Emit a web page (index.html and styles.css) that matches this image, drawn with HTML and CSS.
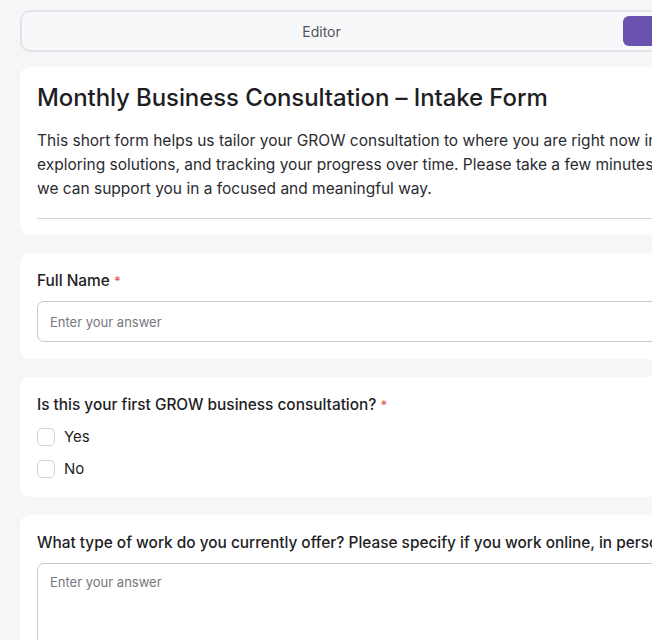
FILE: index.html
```html
<!DOCTYPE html>
<html lang="en">
<head>
    <meta charset="UTF-8">
    <meta name="viewport" content="width=device-width, initial-scale=1.0">
    <title>Monthly Business Consultation - Intake Form</title>
    <link rel="stylesheet" href="styles.css">
</head>
<body>
    <div class="page">
        <div class="tabs">
            <button class="tab">Editor</button>
            <button class="tab active">Preview</button>
        </div>

        <div class="card header-card">
            <h1>Monthly Business Consultation – Intake Form</h1>
            <p class="intro">This short form helps us tailor your GROW consultation to where you are right now in your business, clarifying your goals, understanding your reality,<br>exploring solutions, and tracking your progress over time. Please take a few minutes to answer each question honestly so<br>we can support you in a focused and meaningful way.</p>
            <hr class="divider">
        </div>

        <div class="card">
            <label class="question">Full Name <span class="req">*</span></label>
            <input class="answer" type="text" placeholder="Enter your answer">
        </div>

        <div class="card">
            <label class="question">Is this your first GROW business consultation? <span class="req">*</span></label>
            <div class="options">
                <label class="option"><span class="box"></span>Yes</label>
                <label class="option"><span class="box"></span>No</label>
            </div>
        </div>

        <div class="card">
            <label class="question">What type of work do you currently offer? Please specify if you work online, in person, or both, and who your main clients are.</label>
            <textarea class="answer long" placeholder="Enter your answer"></textarea>
        </div>
    </div>
</body>
</html>
```

FILE: styles.css
```css
body {
    font-family: "Inter", "Lato", sans-serif;
    background-color: #f5f6f8;
    color: #1e1e24;
    margin: 0;
    padding: 0;
    overflow: hidden;
}

.page {
    width: 1240px;
    padding: 10px 20px;
    box-sizing: border-box;
    display: flex;
    flex-direction: column;
    gap: 18px;
}

.tabs {
    display: flex;
    gap: 6px;
    padding: 4px 4px;
    border: 2px solid #e2e3e6;
    border-radius: 10px;
    background-color: #f7f8fa;
    margin-bottom: -3px;
}

.tab {
    flex: 1;
    height: 30px;
    border: none;
    border-radius: 6px;
    background: transparent;
    font-family: inherit;
    font-size: 14px;
    color: #55555c;
}

.tab.active {
    background-color: #6a53b0;
    color: #fff;
}

.card {
    background-color: #fff;
    border-radius: 10px;
    padding: 17px 17px;
}

.header-card {
    padding-top: 16px;
    padding-bottom: 16px;
}

h1 {
    font-size: 24px;
    font-weight: 500;
    margin: 0 0 17px;
    letter-spacing: -0.1px;
}

.intro {
    font-size: 15.5px;
    line-height: 24px;
    color: #2b2b30;
    margin: 0 0 17px;
}

.divider {
    border: none;
    border-top: 1px solid #d4d4d8;
    margin: 0;
}

.question {
    display: block;
    font-size: 15.4px;
    font-weight: 500;
    margin: 1px 0 11px;
}

.req {
    color: #e0605a;
    font-size: 13px;
}

.answer {
    display: block;
    width: 100%;
    box-sizing: border-box;
    height: 41px;
    border: 1px solid #c8c8cc;
    border-radius: 7px;
    padding: 0 12px;
    font-family: inherit;
    font-size: 13px;
    color: #1e1e24;
}

.answer::placeholder {
    color: #77777d;
}

.answer.long {
    height: 110px;
    padding-top: 10px;
    resize: none;
}

.options {
    display: flex;
    flex-direction: column;
    gap: 13px;
    margin-top: 13px;
    padding-bottom: 2px;
}

.option {
    display: flex;
    align-items: center;
    gap: 9px;
    font-size: 15px;
}

.box {
    width: 18px;
    height: 18px;
    box-sizing: border-box;
    border: 1.5px solid #d2d2d6;
    border-radius: 5px;
}
```
